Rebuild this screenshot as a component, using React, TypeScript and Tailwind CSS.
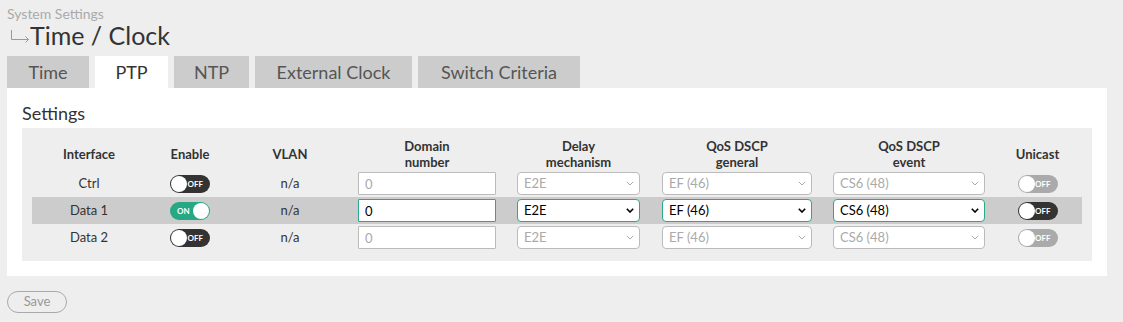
type Row = {
  name: string;
  enabled: boolean;
  active: boolean;
};

const rows: Row[] = [
  { name: "Ctrl", enabled: false, active: false },
  { name: "Data 1", enabled: true, active: true },
  { name: "Data 2", enabled: false, active: false },
];

const tabs = [
  { label: "Time", w: "w-[82px]" },
  { label: "PTP", w: "w-[73px]" },
  { label: "NTP", w: "w-[75px]" },
  { label: "External Clock", w: "w-[157px]" },
  { label: "Switch Criteria", w: "w-[162px]" },
];

const cols = "grid grid-cols-[114px_88px_112px_162px_141px_176px_168px_89px]";

function Toggle({ on, disabled }: { on: boolean; disabled?: boolean }) {
  const bg = disabled ? "bg-[#aaaaaa]" : on ? "bg-[#26a884]" : "bg-[#333333]";
  return (
    <div
      className={`flex h-[18px] w-[40px] items-center justify-between rounded-full px-px ${bg}`}
    >
      {on ? (
        <>
          <span className="pl-[6px] text-[8px] font-bold leading-none text-white">ON</span>
          <span className="h-[16px] w-[16px] rounded-full bg-white" />
        </>
      ) : (
        <>
          <span className="h-[16px] w-[16px] rounded-full bg-white" />
          <span className="pr-[6px] text-[8px] font-bold leading-none text-white">OFF</span>
        </>
      )}
    </div>
  );
}

function Select({ value, width, active }: { value: string; width: string; active: boolean }) {
  return (
    <div className={`relative ${width}`}>
      <select
        disabled={!active}
        value={value}
        onChange={() => {}}
        className={`h-[23px] w-full appearance-none rounded-[4px] border bg-white pl-[6px] text-[13px] ${
          active ? "border-[#2aa889] text-black" : "border-[#bbbbbb] text-[#aaaaaa]"
        }`}
      >
        <option>{value}</option>
      </select>
      <svg
        className="pointer-events-none absolute right-[6px] top-[9px]"
        width="8"
        height="5"
        viewBox="0 0 8 5"
      >
        <path
          d="M0.8 0.8 L4 4 L7.2 0.8"
          fill="none"
          stroke={active ? "#000" : "#aaa"}
          strokeWidth={active ? 1.6 : 1}
        />
      </svg>
    </div>
  );
}

export default function App() {
  return (
    <div className="min-h-screen bg-[#eeeeee] px-[7px] pt-[6px] pb-[10px] font-['Lato',sans-serif] text-[#333333]">
      <div className="text-[14px] leading-[16px] text-[#aaaaaa]">System Settings</div>
      <h1 className="flex h-[27px] items-center text-[25px] leading-[27px]">
        <svg className="ml-[3px] mt-[1px]" width="20" height="13" viewBox="0 0 20 13">
          <path d="M1.5 0 V9.5 H18.5 M15.5 6.5 L18.5 9.5 L15.5 12.5" fill="none" stroke="#999" strokeWidth="1" />
        </svg>
        Time / Clock
      </h1>

      <div className="mt-[7px] flex gap-[6px]">
        {tabs.map((t) => (
          <div
            key={t.label}
            className={`flex h-[32px] items-center justify-center text-[18px] ${t.w} ${
              t.label === "PTP" ? "bg-white text-[#333333]" : "bg-[#cccccc] text-[#555555]"
            }`}
          >
            {t.label}
          </div>
        ))}
      </div>

      <div className="w-[1100px] bg-white px-[15px] pt-[14px] pb-[15px]">
        <div className="text-[18px] leading-[22px]">Settings</div>
        <div className="mt-[4px] bg-[#eeeeee] px-[10px] pt-[9px] pb-[10px] text-[13px]">
          <div className={`${cols} h-[33px] items-center text-center font-bold leading-[16px]`}>
            <div>Interface</div>
            <div>Enable</div>
            <div>VLAN</div>
            <div>
              Domain
              <br />
              number
            </div>
            <div>
              Delay
              <br />
              mechanism
            </div>
            <div>
              QoS DSCP
              <br />
              general
            </div>
            <div>
              QoS DSCP
              <br />
              event
            </div>
            <div>Unicast</div>
          </div>
          {rows.map((r) => (
            <div
              key={r.name}
              className={`${cols} h-[27px] items-center ${r.active ? "bg-[#cccccc]" : ""}`}
            >
              <div className="text-center">{r.name}</div>
              <div className="flex justify-center">
                <Toggle on={r.enabled} />
              </div>
              <div className="text-center">n/a</div>
              <div className="flex justify-center">
                <input
                  readOnly
                  disabled={!r.active}
                  value="0"
                  className={`h-[23px] w-[138px] rounded-[1px] border bg-white pl-[6px] text-[13px] ${
                    r.active ? "border-[#2aa889] text-black" : "border-[#bbbbbb] text-[#aaaaaa]"
                  }`}
                />
              </div>
              <div className="flex justify-center">
                <Select value="E2E" width="w-[123px]" active={r.active} />
              </div>
              <div className="flex justify-center">
                <Select value="EF (46)" width="w-[150px]" active={r.active} />
              </div>
              <div className="flex justify-center">
                <Select value="CS6 (48)" width="w-[152px]" active={r.active} />
              </div>
              <div className="flex justify-center">
                <Toggle on={false} disabled={!r.active} />
              </div>
            </div>
          ))}
        </div>
      </div>

      <button className="mt-[15px] h-[22px] w-[60px] rounded-full border border-[#aaaaaa] text-[13px] text-[#999999]">
        Save
      </button>
    </div>
  );
}
